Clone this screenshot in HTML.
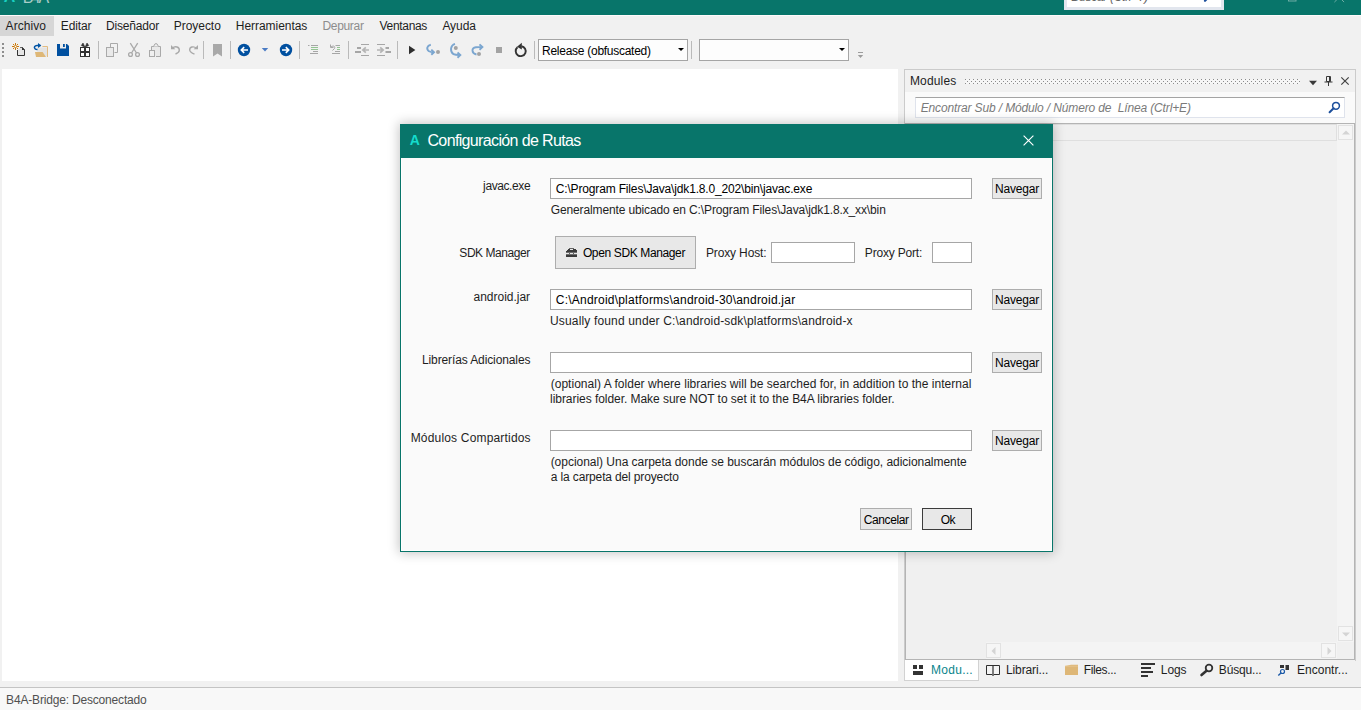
<!DOCTYPE html>
<html lang="es">
<head>
<meta charset="utf-8">
<title>B4A - Configuración de Rutas</title>
<style>
*{box-sizing:border-box;margin:0;padding:0}
html,body{width:1361px;height:710px;overflow:hidden}
body{background:#f1f1f1;font-family:"Liberation Sans",sans-serif;font-size:12px;color:#1e1e1e;position:relative}
.abs{position:absolute}
.t{position:absolute;white-space:nowrap;line-height:16px;height:16px;font-size:12px}
svg{position:absolute;overflow:visible}
#titlebar{left:0;top:0;width:1361px;height:15px;background:#08756a;overflow:hidden}
#tsearch{left:1064px;top:-14px;width:160px;height:24px;background:#fff;border:3px solid #e2e6ee}
#menubar{left:0;top:15px;width:1361px;height:22px;background:#f1f1f1;border-top:1px solid #fdfafb}
#menubar .hl{left:0;top:0;width:54px;height:20px;background:#d6d6d6}
#toolbar{left:0;top:37px;width:1361px;height:32px;background:#f1f1f1}
.combo{position:absolute;top:2px;height:22px;width:150px;background:#fdfdfd;border:1px solid #a5a5a5}
.combo i{position:absolute;right:2.800px;top:8.300px;width:0;height:0;border-left:3.300px solid transparent;border-right:3.300px solid transparent;border-top:3.400px solid #000}
#editor{left:2px;top:69px;width:896px;height:612px;background:#fff}
#panel{left:904px;top:69px;width:452px;height:592px;background:#f1f1f1;border:1px solid #cbcbcb;border-bottom:0}
#pfind{left:0;top:22px;width:450px;height:31px;background:#fafafa}
#pbox{left:10px;top:27px;width:430px;height:21px;background:#fff;border:1px solid;border-color:#a4a4a4 #dfe3ec #dfe3ec #dfe3ec}
#plist{left:0;top:53px;width:450px;height:537px;background:#f0f0f0;border:1px solid #b4b4b4}
#prow{left:0;top:0;width:431px;height:17px;border:1px solid #dfdfdf;background:#f0f0f0}
#vsb{left:431px;top:0;width:17px;height:518px;background:#f4f4f4}
#hsb{left:80px;top:518px;width:351px;height:17px;background:#f4f4f4}
.sbb{position:absolute;width:15px;height:15px;background:#f6f6f6;border:1px solid #e2e2e2}
#tabs{left:904px;top:660px;width:452px;height:22px}
#tab1{left:0;top:0;width:75px;height:21px;background:#fff;border:1px solid #d2d2d2;border-top:0}
#status{left:0;top:687px;width:1361px;height:23px;background:#f8f8f8;border-top:1px solid #c4c4c4}
#dialog{left:400px;top:124px;width:653px;height:428px;background:#fafafa;border:1px solid #08756a;box-shadow:0 0 11px 1px rgba(0,0,0,.24)}
#dbody{left:0;top:33px;width:651px;height:393px;border:1px solid #fff;border-top:0}
#dbar{left:0;top:0;width:651px;height:33px;background:#08756a}
.inp{position:absolute;height:21px;background:#fff;border:1px solid #a6a6a6}
.btn{position:absolute;height:21px;background:#e8e8e8;border:1px solid #adadad}
</style>
</head>
<body>
<div id="titlebar" class="abs">
  <span class="t" id="tA" style="left:3.72px;top:-11px;font-size:16px;color:#19d0c0;font-weight:bold">A</span><span class="t" id="tB4A" style="left:22.87px;top:-10px;font-size:16px;letter-spacing:-1.95px;color:#a9cdc8">B4A</span>
  <div id="tsearch" class="abs"><span class="t" id="tBuscar" style="left:4.37px;top:0px;letter-spacing:-0.29px;color:#666;font-style:italic">Buscar (Ctrl+?)</span>
    <svg style="left:135.500px;top:0px" width="14" height="14" viewBox="0 0 14 14"><circle cx="8.5" cy="5" r="3.6" fill="none" stroke="#1c4f9c" stroke-width="1.6"/><path d="M6 7.6L2 11.8" stroke="#1c4f9c" stroke-width="2.2" stroke-linecap="round"/></svg>
  </div>
  <svg style="left:1288px;top:-8.700px" width="10" height="11" viewBox="0 0 10 11"><rect x=".5" y=".5" width="7.500" height="9.500" fill="none" stroke="#6fada5" stroke-width="1"/></svg>
  <svg style="left:1333.500px;top:-8.500px" width="11" height="11" viewBox="0 0 11 11"><path d="M.4 .4L10.100 10.100M10.100 .4L.4 10.100" fill="none" stroke="#6fada5" stroke-width="1"/></svg>
</div>
<div id="menubar" class="abs">
  <div class="abs hl"></div>
  <span class="t" id="m1" style="left:5.6px;top:2px;letter-spacing:0.06px">Archivo</span><span class="t" id="m2" style="left:60.87px;top:2px;letter-spacing:-0.16px">Editar</span><span class="t" id="m3" style="left:105.96px;top:2px;letter-spacing:-0.18px">Diseñador</span><span class="t" id="m4" style="left:173.82px;top:2px;letter-spacing:-0.05px">Proyecto</span><span class="t" id="m5" style="left:235.85px;top:2px;letter-spacing:-0.05px">Herramientas</span><span class="t" id="m6" style="left:322.41px;top:2px;letter-spacing:-0.31px;color:#8d8d8d">Depurar</span><span class="t" id="m7" style="left:379.6px;top:2px;letter-spacing:-0.33px">Ventanas</span><span class="t" id="m8" style="left:442.4px;top:2px;letter-spacing:-0.07px">Ayuda</span>
</div>
<div id="toolbar" class="abs">
  <div class="combo" style="left:538px"><span class="t" id="cb1" style="left:3.06px;top:3px;letter-spacing:-0.27px;color:#000">Release (obfuscated)</span><i></i></div>
  <div class="combo" style="left:699px"><i></i></div>
  <svg style="left:0;top:0" width="900" height="32" viewBox="0 37 900 32">
<g fill="#8e8e8e"><rect x="2" y="43" width="2" height="2"/><rect x="2" y="47" width="2" height="2"/><rect x="2" y="51" width="2" height="2"/><rect x="2" y="55" width="2" height="2"/></g>
<g fill="#bababa"><rect x="98" y="41" width="1" height="18"/><rect x="203" y="41" width="1" height="18"/><rect x="230" y="41" width="1" height="18"/><rect x="299" y="41" width="1" height="18"/><rect x="348" y="41" width="1" height="18"/><rect x="397" y="41" width="1" height="18"/><rect x="534" y="41" width="1" height="18"/><rect x="691" y="41" width="1" height="18"/></g>
<!-- new -->
<path d="M17.5 50V55.500H24.500V49.700L22.300 47.500H20.200" fill="none" stroke="#333" stroke-width="1"/>
<path d="M18 50V55H24V49.500L22 47.800H20.500z" fill="#e5e5e5"/>
<path d="M22 47V50H25z" fill="#333"/>
<g stroke="#cc7a0a" stroke-width="1" fill="none"><path d="M15.500 43V45.300M15.500 47.700V50M12 46.500H14.300M16.700 46.500H19"/></g>
<g fill="#cc7a0a"><rect x="13" y="44" width="1" height="1"/><rect x="17" y="44" width="1" height="1"/><rect x="13" y="48" width="1" height="1"/><rect x="17" y="48" width="1" height="1"/></g>
<circle cx="15.500" cy="46.500" r="1.200" fill="#fff" stroke="#cc7a0a" stroke-width="1"/>
<!-- open -->
<path d="M42.400 46.500H47.500V57" fill="none" stroke="#e2bb80" stroke-width="1"/>
<path d="M37.300 47.500H47V56.500H45.500L42.500 52H37.300z" fill="#e3e3e3"/>
<path d="M35 52H42.700L46 57H36z" fill="#deb777"/>
<path d="M40.500 45.500H37C34.500 45.500 33.800 47.500 35 48.700C35.600 49.400 36.500 49.500 37.500 49.500" fill="none" stroke="#0054a6" stroke-width="1.500"/>
<path d="M38 43L41.300 45.500L38 48z" fill="#0054a6"/>
<!-- save -->
<path d="M57 44H67L69 46V56H57z" fill="#0050a0"/>
<rect x="60" y="44" width="6" height="4.500" fill="#ececec"/>
<rect x="63" y="44" width="1.800" height="3" fill="#0050a0"/>
<!-- gift -->
<rect x="80" y="47" width="10" height="10" fill="#333"/>
<g fill="#fff"><rect x="81" y="48" width="3" height="3"/><rect x="86" y="48" width="3" height="3"/><rect x="81" y="53" width="3" height="3"/><rect x="86" y="53" width="3" height="3"/></g>
<path d="M85 47.300L81.300 45.500L83 43zM85 47.300L88.700 45.500L87 43z" fill="#333" stroke="#333" stroke-width=".600" stroke-linejoin="round"/>
<!-- copy -->
<path d="M110.500 47V43.500H117.500V52.500H114.500" fill="none" stroke="#a9a9a9" stroke-width="1"/>
<rect x="106.500" y="47.500" width="7" height="9" fill="#e9e9e9" stroke="#a9a9a9" stroke-width="1"/>
<!-- cut -->
<g fill="none" stroke="#a9a9a9" stroke-width="1.300"><path d="M130.300 43.200L136.500 53M137.700 43.200L131.500 53"/><circle cx="130.500" cy="54.500" r="1.900"/><circle cx="137.500" cy="54.500" r="1.900"/></g>
<!-- paste -->
<path d="M151.500 50V46.500H160.500V56.500H156" fill="#e9e9e9" stroke="#a9a9a9" stroke-width="1"/>
<path d="M153.500 46.500L155 43.800H157L158.500 46.500" fill="#f0f0f0" stroke="#a9a9a9" stroke-width="1"/>
<rect x="149.500" y="50.500" width="5" height="6" fill="#f0f0f0" stroke="#a9a9a9" stroke-width="1"/>
<!-- undo -->
<path d="M172 48.200C175.500 45.500 179.500 47 179.300 50.200C179.200 52 177.500 53.300 175.500 54" fill="none" stroke="#a9a9a9" stroke-width="1.400"/>
<path d="M171 45V49.300H175.300z" fill="#a9a9a9"/>
<!-- redo -->
<path d="M196.500 48.200C193.500 45.700 189.500 47 189.700 50C189.800 51.800 192 53.200 194.500 54.200" fill="none" stroke="#a9a9a9" stroke-width="1.400"/>
<path d="M198 45V49.300H193.700z" fill="#a9a9a9"/>
<!-- bookmark -->
<path d="M213 44H222V56.500L217.500 53.500L213 56.500z" fill="#a9a9a9"/>
<!-- back / fwd -->
<circle cx="244" cy="50" r="6.200" fill="#0050a0"/>
<path d="M248 50H241.500M244.200 47.200L241.300 50L244.200 52.800" fill="none" stroke="#fff" stroke-width="1.600"/>
<path d="M261.800 48H268.200L265 51.600z" fill="#4a7bc4"/>
<circle cx="286" cy="50" r="6.200" fill="#0050a0"/>
<path d="M282 50H288.500M285.800 47.200L288.700 50L285.800 52.800" fill="none" stroke="#fff" stroke-width="1.600"/>
<!-- comment / uncomment -->
<g fill="#a6a6a6"><rect x="308" y="45" width="1.500" height="1"/><rect x="311" y="45" width="7" height="1"/><rect x="313" y="51" width="5" height="1"/><rect x="310" y="53" width="8" height="1"/>
<rect x="335.500" y="45" width="4.500" height="1"/><rect x="335" y="51" width="5" height="1"/><rect x="332" y="53" width="8" height="1"/></g>
<g fill="#93c493"><rect x="311" y="47" width="7" height="1"/><rect x="311" y="49" width="7" height="1"/><rect x="337" y="47" width="3" height="1"/><rect x="337" y="49" width="3" height="1"/></g>
<path d="M330.500 44.500V47.500H333.500M331 47C333.500 45 335.500 46.500 334.500 48.500L332.500 50.500" fill="none" stroke="#a6a6a6" stroke-width="1"/>
<!-- outdent / indent -->
<g fill="#a6a6a6"><rect x="361" y="44" width="8" height="1"/><rect x="361" y="55" width="8" height="1"/><rect x="357" y="47" width="4" height="2"/><rect x="355" y="51" width="6" height="2"/>
<rect x="377" y="44" width="8" height="1"/><rect x="377" y="55" width="8" height="1"/><rect x="385.500" y="47" width="3.500" height="2"/><rect x="385.500" y="51" width="5.500" height="2"/></g>
<path d="M369 50H363.500M365.800 47.300L362.800 50L365.800 52.700" fill="none" stroke="#b4b4b4" stroke-width="1.700"/>
<path d="M377 50H382.500M380.200 47.300L383.200 50L380.200 52.700" fill="none" stroke="#b4b4b4" stroke-width="1.700"/>
<!-- play -->
<path d="M409 45.800L415.400 50L409 54.200z" fill="#2e2e2e"/>
<!-- steps -->
<g fill="none" stroke="#7ba6d0" stroke-width="1.900"><path d="M430.800 44.800C427 45.500 426 49 429 51.200C430.500 52.100 432 52.200 433.500 52.200"/><path d="M431.300 49.600L434 52.200L431.300 54.800"/>
<path d="M455 43.800C450.500 45 449.500 51.500 453.500 54.200C455.500 55.200 458 55.100 460 55.100"/><path d="M457.500 52.500L460.300 55.100L457.500 57.700"/>
<path d="M476.500 54.500C471.500 53.500 471 48 476 47.200C478 47 480 47.100 482 47.100"/><path d="M479.500 44.400L482.400 47.100L479.500 49.800"/></g>
<g fill="#a3a3a3"><circle cx="438" cy="52" r="2"/><circle cx="455.800" cy="48" r="2"/><circle cx="479" cy="54" r="2"/><rect x="496" y="47" width="6" height="6"/></g>
<!-- restart -->
<path d="M517.500 47.300A5 5 0 1 0 521.500 46.200" fill="none" stroke="#333" stroke-width="1.900"/>
<path d="M521.800 42.800V49.600L517 46.800z" fill="#333"/>
<!-- overflow -->
<rect x="858" y="52" width="5" height="1" fill="#9c9c9c"/><path d="M857.800 55H863.200L860.500 58z" fill="#9c9c9c"/>
</svg>
</div>
<div id="editor" class="abs"></div>
<div id="panel" class="abs">
  <span class="t" id="pMod" style="left:4.96px;top:3px;letter-spacing:0.15px">Modules</span>
  <svg style="left:0;top:0" width="450" height="22" viewBox="905 70 450 22">
<defs><pattern id="dots" x="965" y="79" width="4" height="4" patternUnits="userSpaceOnUse"><rect x="0" y="0" width="4" height="4" fill="#f6f6f6"/><rect x="0" y="0" width="1" height="1" fill="#8c8c8c"/><rect x="2" y="2" width="1" height="1" fill="#8c8c8c"/></pattern></defs>
<rect x="965" y="79" width="335" height="5" fill="url(#dots)" shape-rendering="crispEdges"/>
<path d="M1309 80.800H1317L1313 85.200z" fill="#3a3a3a"/>
<path d="M1326.500 76.500H1330.500V81.500H1326.500zM1329.500 76.500V81.500M1324.500 82H1332.500M1328.500 82V86" fill="none" stroke="#3a3a3a" stroke-width="1"/>
<path d="M1341.300 77.300L1348.700 84.700M1348.700 77.300L1341.300 84.700" fill="none" stroke="#444" stroke-width="1.200"/>
</svg>
  <div id="pfind" class="abs"></div>
  <div id="pbox" class="abs"><span class="t" id="pPh" style="left:4.67px;top:2px;letter-spacing:-0.14px;color:#7a7a7a;font-style:italic;white-space:pre">Encontrar Sub / Módulo / Número de  Línea (Ctrl+E)</span>
    <svg style="left:411.500px;top:3px" width="13" height="13" viewBox="0 0 13 13"><circle cx="8" cy="4.8" r="3.4" fill="#fff" stroke="#1c4f9c" stroke-width="1.5"/><path d="M5.6 7.3L1.6 11.3" stroke="#1c4f9c" stroke-width="2" stroke-linecap="round"/></svg>
  </div>
  <div id="plist" class="abs">
    <div id="prow" class="abs"></div>
    <div id="vsb" class="abs">
      <div class="sbb" style="left:1px;top:1px"><svg style="left:3px;top:4px" width="8" height="5" viewBox="0 0 8 5"><path d="M0 4.5L4 .5L8 4.5z" fill="#d4d4d4"/></svg></div>
      <div class="sbb" style="left:1px;top:502px"><svg style="left:3px;top:5px" width="8" height="5" viewBox="0 0 8 5"><path d="M0 .5L4 4.5L8 .5z" fill="#d4d4d4"/></svg></div>
    </div>
    <div id="hsb" class="abs">
      <div class="sbb" style="left:0;top:1px"><svg style="left:4px;top:3px" width="5" height="8" viewBox="0 0 5 8"><path d="M4.5 0L.5 4L4.5 8z" fill="#d4d4d4"/></svg></div>
      <div class="sbb" style="left:335px;top:1px"><svg style="left:5px;top:3px" width="5" height="8" viewBox="0 0 5 8"><path d="M.5 0L4.5 4L.5 8z" fill="#d4d4d4"/></svg></div>
    </div>
  </div>
</div>
<div id="tabs" class="abs">
  <div id="tab1" class="abs"></div>
  <span class="t" id="tb1" style="left:27.07px;top:2px;letter-spacing:0.27px;color:#0a858c">Modu...</span><span class="t" id="tb2" style="left:101.96px;top:2px;letter-spacing:-0.11px">Librari...</span><span class="t" id="tb3" style="left:179.67px;top:2px;letter-spacing:-0.35px">Files...</span><span class="t" id="tb4" style="left:256.87px;top:2px;letter-spacing:-0.13px">Logs</span><span class="t" id="tb5" style="left:314.87px;top:2px;letter-spacing:-0.17px">Búsqu...</span><span class="t" id="tb6" style="left:392.96px;top:2px;letter-spacing:0.02px">Encontr...</span>
  <svg style="left:0;top:0" width="452" height="22" viewBox="904 660 452 22">
<!-- modules -->
<g fill="#333"><rect x="913" y="665" width="4" height="4"/><rect x="919" y="665" width="4" height="4"/><rect x="913" y="671" width="10" height="4"/></g>
<!-- libraries (book) -->
<path d="M986.500 665.500V674.500H992L993 675.500L994 674.500H999.500V665.500z" fill="#f3f3f3" stroke="#2e2e2e" stroke-width="1"/><path d="M993 665.500V675.500" stroke="#2e2e2e" stroke-width="1.200"/>
<!-- files (folder) -->
<path d="M1065 666L1071 664.800H1078V675H1065z" fill="#deb777"/><path d="M1065 666.200H1078" stroke="#e8c995" stroke-width=".800"/>
<!-- logs -->
<g fill="#333"><rect x="1141" y="663" width="14" height="2"/><rect x="1141" y="667" width="10" height="2"/><rect x="1141" y="671" width="12" height="2"/><rect x="1141" y="675" width="7" height="2"/></g>
<!-- search -->
<circle cx="1209" cy="668" r="3.300" fill="none" stroke="#333" stroke-width="1.800"/><path d="M1206.500 670.800L1201.500 675" stroke="#333" stroke-width="2.600" stroke-linecap="round"/>
<!-- find -->
<g fill="#333"><rect x="1280" y="665" width="4" height="3"/><rect x="1285.500" y="665" width="3.500" height="5"/></g>
<circle cx="1282.500" cy="671.500" r="2" fill="none" stroke="#1c5aa8" stroke-width="1.200"/><path d="M1281 673L1278.300 675.500" stroke="#1c5aa8" stroke-width="1.500"/>
</svg>
</div>
<div id="status" class="abs"><span class="t" id="st" style="left:6.1px;top:4px;letter-spacing:-0.18px;color:#505050">B4A-Bridge: Desconectado</span></div>
<div id="dialog" class="abs">
  <div id="dbody" class="abs"></div>
  <div id="dbar" class="abs"><span class="t" id="dA" style="left:8.66px;top:7px;font-size:14px;color:#14dccd;font-weight:bold">A</span><span class="t" id="dTitle" style="left:26.46px;top:8px;font-size:16px;letter-spacing:-0.64px;color:#fff">Configuración de Rutas</span>
    <svg style="left:622.200px;top:9.600px" width="11" height="11" viewBox="0 0 11 11"><path d="M.6 .6L10.4 10.4M10.4 .6L.6 10.4" fill="none" stroke="#fff" stroke-width="1.15"/></svg>
  </div>
  <span class="t" id="l1" style="left:82.12px;top:53px;letter-spacing:-0.4px">javac.exe</span>
  <div class="inp" style="left:149px;top:53px;width:422px"><span class="t" id="i1" style="left:4.77px;top:2px;letter-spacing:-0.16px;color:#000">C:\Program Files\Java\jdk1.8.0_202\bin\javac.exe</span></div>
  <div class="btn" style="left:591px;top:53px;width:50px"><span class="t" id="b1" style="left:1.96px;top:2px;letter-spacing:-0.17px;color:#000">Navegar</span></div>
  <span class="t" id="h1" style="left:149.77px;top:77px;letter-spacing:-0.13px">Generalmente ubicado en C:\Program Files\Java\jdk1.8.x_xx\bin</span>
  <span class="t" id="l2" style="left:58.35px;top:120px;letter-spacing:-0.45px">SDK Manager</span>
  <div class="btn" style="left:154px;top:111px;width:141px;height:33px"><span class="t" id="bSdk" style="left:26.92px;top:8px;letter-spacing:-0.37px;color:#000">Open SDK Manager</span>
    <svg style="left:10px;top:11px" width="11" height="9" viewBox="0 0 11 9" shape-rendering="crispEdges"><g fill="#3a3a3a"><rect x="3" y="0" width="5" height="1" opacity=".75"/><rect x="1.500" y="1" width="2.500" height="1"/><rect x="7" y="1" width="2.500" height="1"/><rect x=".5" y="2" width="10" height="1"/><rect x="0" y="3" width="11" height="1"/><rect x="0" y="4" width="11" height="1" opacity=".7"/><rect x="3" y="5" width="1" height="1" opacity=".8"/><rect x="7" y="5" width="1" height="1" opacity=".8"/><rect x="0" y="6" width="11" height="1" opacity=".7"/><rect x="0" y="7" width="11" height="2"/></g></svg>
  </div>
  <span class="t" id="lHost" style="left:304.96px;top:120px;letter-spacing:-0.14px">Proxy Host:</span>
  <div class="inp" style="left:370px;top:117px;width:84px"></div>
  <span class="t" id="lPort" style="left:463.87px;top:120px;letter-spacing:-0.2px">Proxy Port:</span>
  <div class="inp" style="left:531px;top:117px;width:40px"></div>
  <span class="t" id="l3" style="left:72.53px;top:164px;letter-spacing:-0.01px">android.jar</span>
  <div class="inp" style="left:149px;top:164px;width:422px"><span class="t" id="i3" style="left:4.77px;top:2px;letter-spacing:0.22px;color:#000">C:\Android\platforms\android-30\android.jar</span></div>
  <div class="btn" style="left:591px;top:164px;width:50px"><span class="t" id="b3" style="left:1.96px;top:2px;letter-spacing:-0.17px;color:#000">Navegar</span></div>
  <span class="t" id="h3" style="left:148.99px;top:188px;letter-spacing:0.16px">Usually found under C:\android-sdk\platforms\android-x</span>
  <span class="t" id="l4" style="left:20.96px;top:227px;letter-spacing:-0.11px">Librerías Adicionales</span>
  <div class="inp" style="left:149px;top:227px;width:422px"></div>
  <div class="btn" style="left:591px;top:227px;width:50px"><span class="t" id="b4" style="left:1.96px;top:2px;letter-spacing:-0.17px;color:#000">Navegar</span></div>
  <span class="t" id="h4a" style="left:149.67px;top:251px;letter-spacing:0.03px">(optional) A folder where libraries will be searched for, in addition to the internal</span><span class="t" id="h4b" style="left:149.05px;top:266px;letter-spacing:-0.05px">libraries folder. Make sure NOT to set it to the B4A libraries folder.</span>
  <span class="t" id="l5" style="left:9.67px;top:305px;letter-spacing:0.18px">Módulos Compartidos</span>
  <div class="inp" style="left:149px;top:305px;width:422px"></div>
  <div class="btn" style="left:591px;top:305px;width:50px"><span class="t" id="b5" style="left:1.96px;top:2px;letter-spacing:-0.17px;color:#000">Navegar</span></div>
  <span class="t" id="h5a" style="left:149.67px;top:329px;letter-spacing:-0.03px">(opcional) Una carpeta donde se buscarán módulos de código, adicionalmente</span><span class="t" id="h5b" style="left:149.83px;top:344px;letter-spacing:-0.14px">a la carpeta del proyecto</span>
  <div class="btn" style="left:459px;top:383px;width:52px;height:22px"><span class="t" id="bCan" style="left:2.77px;top:3px;letter-spacing:-0.39px;color:#000">Cancelar</span></div>
  <div class="btn" style="left:521px;top:383px;width:50px;height:22px;border-color:#3c3c3c"><span class="t" id="bOk" style="left:17.82px;top:3px;letter-spacing:-0.76px;color:#000">Ok</span></div>
</div>
</body>
</html>
